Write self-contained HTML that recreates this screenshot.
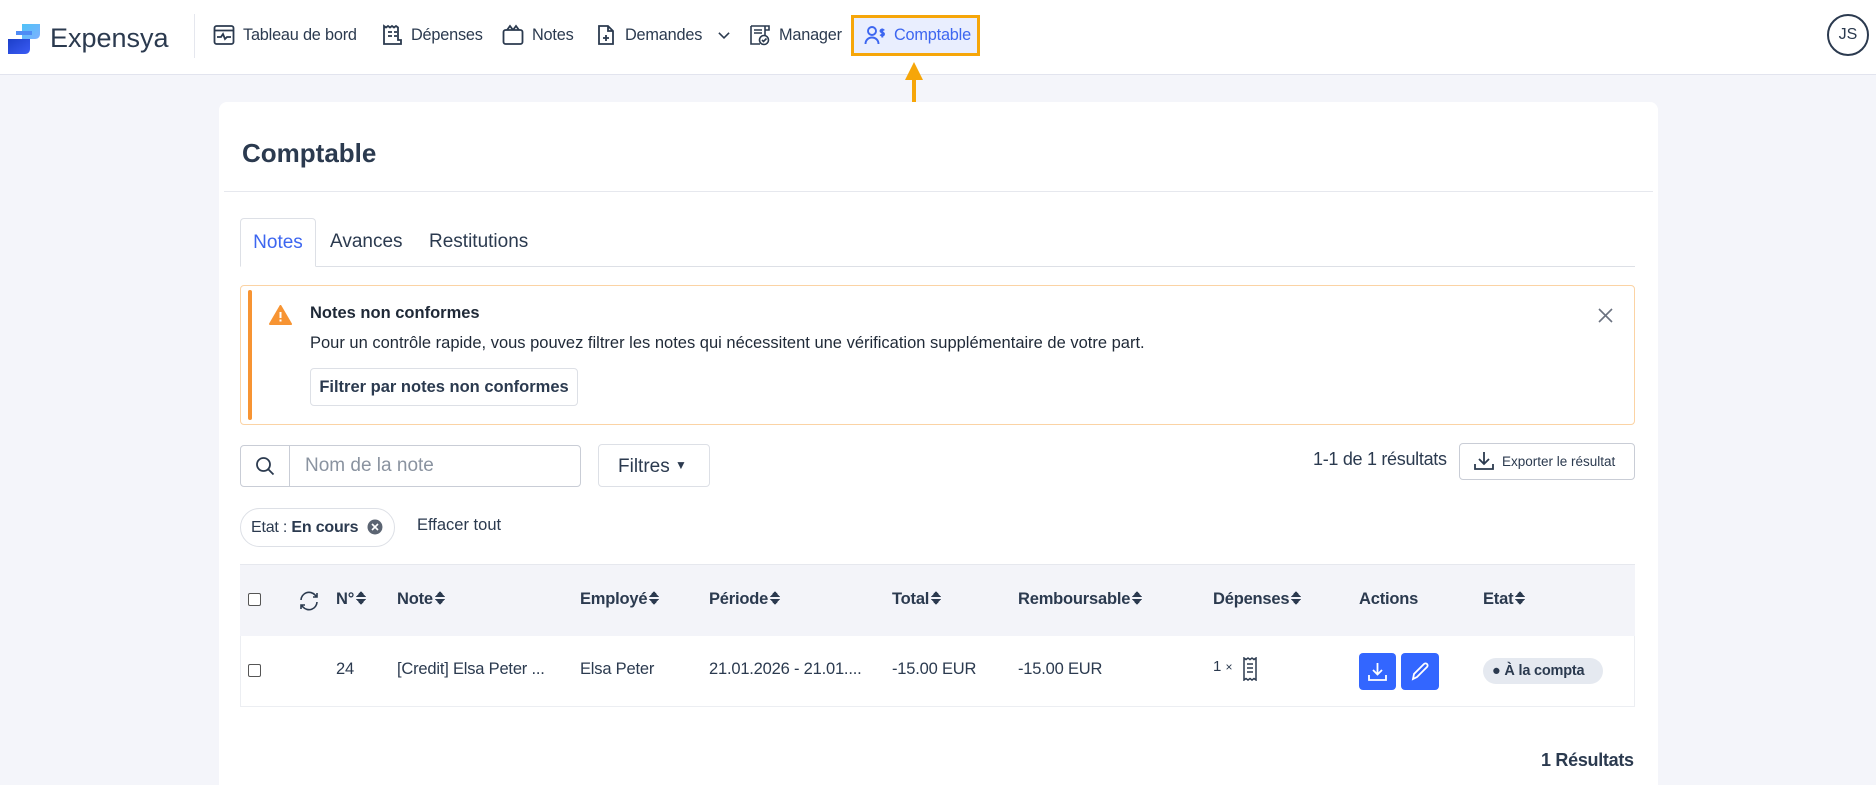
<!DOCTYPE html>
<html style="overflow:hidden;height:785px"><head><meta charset="utf-8"><style>
*{box-sizing:border-box;margin:0;padding:0}
body{width:1876px;height:785px;overflow:hidden;background:#f4f5fa;font-family:"Liberation Sans",Arial,sans-serif;color:#2b3a4f;position:relative}
.a{position:absolute;white-space:nowrap}
.nav{position:absolute;left:0;top:0;width:1876px;height:75px;background:#fff;border-bottom:1px solid #e2e4ee}
.ni{position:absolute;top:24px;font-size:16.3px;color:#2b3a4f;display:flex;align-items:center;gap:8px;letter-spacing:-0.2px}
.ni svg{width:22px;height:22px}
.card{position:absolute;left:219px;top:102px;width:1439px;height:683px;background:#fff;border-radius:8px 8px 0 0}
.th{font-size:16.5px;font-weight:bold;color:#2b3a4f;top:590px;letter-spacing:-0.2px}
.td{font-size:16.5px;color:#2b3a4f;top:660px;letter-spacing:-0.2px}
.sort{display:inline-block;width:10px;height:14px;vertical-align:-1px;margin-left:2px;background:
 linear-gradient(to bottom right,transparent 50%,#2b3a4f 50%) 0 0/5px 6px no-repeat,
 linear-gradient(to bottom left,transparent 50%,#2b3a4f 50%) 5px 0/5px 6px no-repeat,
 linear-gradient(to top right,transparent 50%,#2b3a4f 50%) 0 8px/5px 6px no-repeat,
 linear-gradient(to top left,transparent 50%,#2b3a4f 50%) 5px 8px/5px 6px no-repeat}
.cb{position:absolute;width:13px;height:13px;border:1px solid #555;border-radius:2px;background:#fff}
</style></head><body>
<div class="nav"></div>
<svg class="a" style="left:8px;top:22px" width="36" height="34" viewBox="0 0 36 34">
<defs><linearGradient id="g1" x1="0" y1="0" x2="1" y2="1"><stop offset="0" stop-color="#4fc3f7"/><stop offset="1" stop-color="#7fb0ff"/></linearGradient>
<linearGradient id="g2" x1="0" y1="0" x2="1" y2="1"><stop offset="0" stop-color="#1c3fc9"/><stop offset="1" stop-color="#3b5cf5"/></linearGradient></defs>
<path d="M14 2h18v10c0 3-2 5-5 5H14z" fill="url(#g1)"/>
<path d="M8 9h16v4H8z" fill="#4f8cf5"/>
<path d="M0 17h22v10c0 3-2 5-5 5H0z" fill="url(#g2)"/>
</svg>
<div class="a" style="left:50px;top:23px;font-size:27px;color:#2b3a4f">Expensya</div>
<div class="a" style="left:194px;top:14px;width:1px;height:44px;background:#e5e7ee"></div>

<div class="ni" style="left:213px"><svg viewBox="0 0 22 22" fill="none" stroke="#2b3a4f" stroke-width="1.8"><rect x="1.5" y="2" width="19" height="18" rx="2"/><path d="M1.5 6.5h19M4 13h4l2-3 2 5 2-2h4"/></svg><span>Tableau de bord</span></div>
<div class="ni" style="left:381px"><svg viewBox="0 0 22 22" fill="none" stroke="#2b3a4f" stroke-width="1.8"><path d="M3 20V2l2 1.5 2-1.5 2 1.5 2-1.5 2 1.5 2-1.5 2 1.5V16h3v4H3z"/><path d="M7 8h4M7 12h4M13 8h3M13 12h3"/></svg><span>Dépenses</span></div>
<div class="ni" style="left:502px"><svg viewBox="0 0 22 22" fill="none" stroke="#2b3a4f" stroke-width="1.8"><rect x="1.5" y="6" width="19" height="14" rx="2"/><path d="M5 6l3-4 3 4M11 6l3-4 3 4"/></svg><span>Notes</span></div>
<div class="ni" style="left:595px"><svg viewBox="0 0 22 22" fill="none" stroke="#2b3a4f" stroke-width="1.8"><path d="M4 2h9l5 5v13H4z M13 2v5h5M11 11v6M8 14h6"/></svg><span>Demandes</span><svg viewBox="0 0 22 22" style="width:16px;height:16px;margin-left:6px" fill="none" stroke="#2b3a4f" stroke-width="2.2"><path d="M4 8l7 7 7-7"/></svg></div>
<div class="ni" style="left:749px"><svg viewBox="0 0 22 22" fill="none" stroke="#2b3a4f" stroke-width="1.6"><path d="M2 2h14v10M2 2v18h9M5 6h8M5 9h8M16 2h4v4h-4"/><circle cx="15" cy="16" r="4.5"/><path d="M13 16l1.5 1.5 3-3"/></svg><span>Manager</span></div>
<div class="a" style="left:851px;top:15px;width:129px;height:41px;border:3px solid #f6a609;background:#e9eefe"></div>
<div class="ni" style="left:864px;color:#3d66f0"><svg viewBox="0 0 22 22" fill="none" stroke="#3d66f0" stroke-width="1.9"><circle cx="8" cy="7" r="4"/><path d="M1.5 20c0-4 3-6.5 6.5-6.5s6.5 2.5 6.5 6.5"/><path d="M20 6.5c-.5-1-3.5-1.3-3.5.5s3.5 1 3.5 3-3 1.6-3.6.5M18.3 4.5v9"/></svg><span>Comptable</span></div>
<svg class="a" style="left:904px;top:62px" width="20" height="50"><path d="M10 0L1 18h18z" fill="#f6a609"/><rect x="8" y="16" width="4" height="32" rx="2" fill="#f6a609"/></svg>
<div class="a" style="left:1827px;top:14px;width:42px;height:42px;border:2px solid #2b3a4f;border-radius:50%;font-size:16px;text-align:center;line-height:38px;color:#2b3a4f">JS</div>

<div class="card"></div>
<div class="a" style="left:242px;top:138px;font-size:26px;font-weight:bold;color:#2b3a4f">Comptable</div>
<div class="a" style="left:224px;top:191px;width:1429px;height:1px;background:#e6e8ee"></div>
<div class="a" style="left:240px;top:266px;width:1395px;height:1px;background:#dde0e6"></div>
<div class="a" style="left:240px;top:218px;width:76px;height:49px;border:1px solid #dde0e6;border-bottom:1px solid #fff;border-radius:4px 4px 0 0;background:#fff;font-size:19px;color:#3d66f0;text-align:center;line-height:47px">Notes</div>
<div class="a" style="left:330px;top:231px;font-size:19px">Avances</div>
<div class="a" style="left:429px;top:231px;font-size:19px">Restitutions</div>
<div class="a" style="left:240px;top:285px;width:1395px;height:140px;border:1px solid #fbd3a4;border-radius:4px;background:#fff"></div>
<div class="a" style="left:248px;top:290px;width:4px;height:130px;background:#f79433;border-radius:2px"></div>
<svg class="a" style="left:269px;top:305px" width="23" height="20" viewBox="0 0 23 20"><path d="M11.5 1L22 19H1z" fill="#f79433" stroke="#f79433" stroke-linejoin="round" stroke-width="2"/><rect x="10.5" y="7" width="2" height="6" fill="#fff"/><rect x="10.5" y="14.5" width="2" height="2" fill="#fff"/></svg>
<div class="a" style="left:310px;top:304px;font-size:16.5px;font-weight:bold;color:#1f2937">Notes non conformes</div>
<div class="a" style="left:310px;top:334px;font-size:16.5px;color:#1f2937">Pour un contrôle rapide, vous pouvez filtrer les notes qui nécessitent une vérification supplémentaire de votre part.</div>
<div class="a" style="left:310px;top:368px;width:268px;height:38px;border:1px solid #dde0e6;border-radius:4px;font-size:16.5px;font-weight:bold;text-align:center;line-height:36px;color:#2b3a4f">Filtrer par notes non conformes</div>
<svg class="a" style="left:1598px;top:308px" width="15" height="15"><path d="M1 1l13 13M14 1L1 14" stroke="#6b7280" stroke-width="1.6"/></svg>
<div class="a" style="left:240px;top:445px;width:341px;height:42px;border:1px solid #c9cdd6;border-radius:4px;background:#fff"></div>
<div class="a" style="left:289px;top:446px;width:1px;height:40px;background:#c9cdd6"></div>
<svg class="a" style="left:255px;top:456px" width="20" height="20" fill="none" stroke="#2b3a4f" stroke-width="1.8"><circle cx="8.5" cy="8.5" r="6.5"/><path d="M13.5 13.5l5 5"/></svg>
<div class="a" style="left:305px;top:455px;font-size:19px;color:#8a93a0">Nom de la note</div>
<div class="a" style="left:598px;top:444px;width:112px;height:43px;border:1px solid #dde0e6;border-radius:4px;font-size:19px;line-height:41px;padding-left:19px">Filtres <span style="font-size:12px;vertical-align:3px">▼</span></div>
<div class="a" style="left:1313px;top:449px;font-size:18px;color:#2b3a4f;letter-spacing:-0.3px">1-1 de 1 résultats</div>
<div class="a" style="left:1459px;top:443px;width:176px;height:37px;border:1px solid #c9cdd6;border-radius:4px;font-size:13.5px;line-height:35px;padding-left:42px">Exporter le résultat</div>
<svg class="a" style="left:1474px;top:451px" width="20" height="20" fill="none" stroke="#2b3a4f" stroke-width="1.8"><path d="M10 1v12M5 8l5 5 5-5M1 13v5h18v-5"/></svg>
<div class="a" style="left:240px;top:508px;width:155px;height:39px;border:1px solid #dde0e6;border-radius:20px;font-size:16px;line-height:37px;padding-left:10px;letter-spacing:-0.2px">Etat : <b>En cours</b></div>
<svg class="a" style="left:367px;top:519px" width="16" height="16"><circle cx="8" cy="8" r="7.5" fill="#5b6472"/><path d="M5 5l6 6M11 5l-6 6" stroke="#fff" stroke-width="1.6"/></svg>
<div class="a" style="left:417px;top:516px;font-size:16.5px">Effacer tout</div>
<div class="a" style="left:240px;top:564px;width:1395px;height:72px;background:#f3f4f9;border-top:1px solid #e6e8ee"></div>
<div class="a" style="left:240px;top:636px;width:1395px;height:71px;border:1px solid #eceef2;border-top:none;background:#fff"></div>
<div class="cb" style="left:248px;top:593px"></div>
<svg class="a" style="left:298px;top:590px" width="22" height="22" fill="none" stroke="#2b3a4f" stroke-width="1.6"><path d="M3 10a8 8 0 0 1 14-5l2 2M19 3v4h-4M19 12a8 8 0 0 1-14 5l-2-2M3 19v-4h4"/></svg>
<div class="a th" style="left:336px">N°<span class="sort"></span></div>
<div class="a th" style="left:397px">Note<span class="sort"></span></div>
<div class="a th" style="left:580px">Employé<span class="sort"></span></div>
<div class="a th" style="left:709px">Période<span class="sort"></span></div>
<div class="a th" style="left:892px">Total<span class="sort"></span></div>
<div class="a th" style="left:1018px">Remboursable<span class="sort"></span></div>
<div class="a th" style="left:1213px">Dépenses<span class="sort"></span></div>
<div class="a th" style="left:1359px">Actions</div>
<div class="a th" style="left:1483px">Etat<span class="sort"></span></div>
<div class="cb" style="left:248px;top:664px"></div>
<div class="a td" style="left:336px">24</div>
<div class="a td" style="left:397px">[Credit] Elsa Peter ...</div>
<div class="a td" style="left:580px">Elsa Peter</div>
<div class="a td" style="left:709px">21.01.2026 - 21.01....</div>
<div class="a td" style="left:892px">-15.00 EUR</div>
<div class="a td" style="left:1018px">-15.00 EUR</div>
<div class="a" style="left:1213px;top:658px;font-size:15px">1 <span style="font-size:12px">×</span></div>
<svg class="a" style="left:1242px;top:657px" width="16" height="24" fill="none" stroke="#2b3a4f" stroke-width="1.5"><path d="M2 1l2 1.5 2-1.5 2 1.5 2-1.5 2 1.5 2-1.5v22l-2-1.5-2 1.5-2-1.5-2 1.5-2-1.5-2 1.5z"/><path d="M5 7h6M5 11h6M5 15h6"/></svg>
<div class="a" style="left:1359px;top:653px;width:37px;height:37px;background:#3366ff;border-radius:4px"></div>
<svg class="a" style="left:1367px;top:661px" width="21" height="21" fill="none" stroke="#fff" stroke-width="1.8"><path d="M10.5 2v11M6 9l4.5 4.5L15 9M2 14v5h17v-5"/></svg>
<div class="a" style="left:1401px;top:653px;width:38px;height:37px;background:#3366ff;border-radius:4px"></div>
<svg class="a" style="left:1410px;top:661px" width="21" height="21" fill="none" stroke="#fff" stroke-width="1.8"><path d="M3 18l1-5L14 3a2.1 2.1 0 0 1 3 3L7 16z"/></svg>
<div class="a" style="left:1483px;top:658px;width:120px;height:26px;background:#e5e9f0;border-radius:13px;font-size:14.5px;font-weight:bold;line-height:26px;padding-left:9px;letter-spacing:-0.2px">● À la compta</div>
<div class="a" style="left:1541px;top:750px;font-size:18px;font-weight:bold;letter-spacing:-0.3px">1 Résultats</div>
</body></html>
